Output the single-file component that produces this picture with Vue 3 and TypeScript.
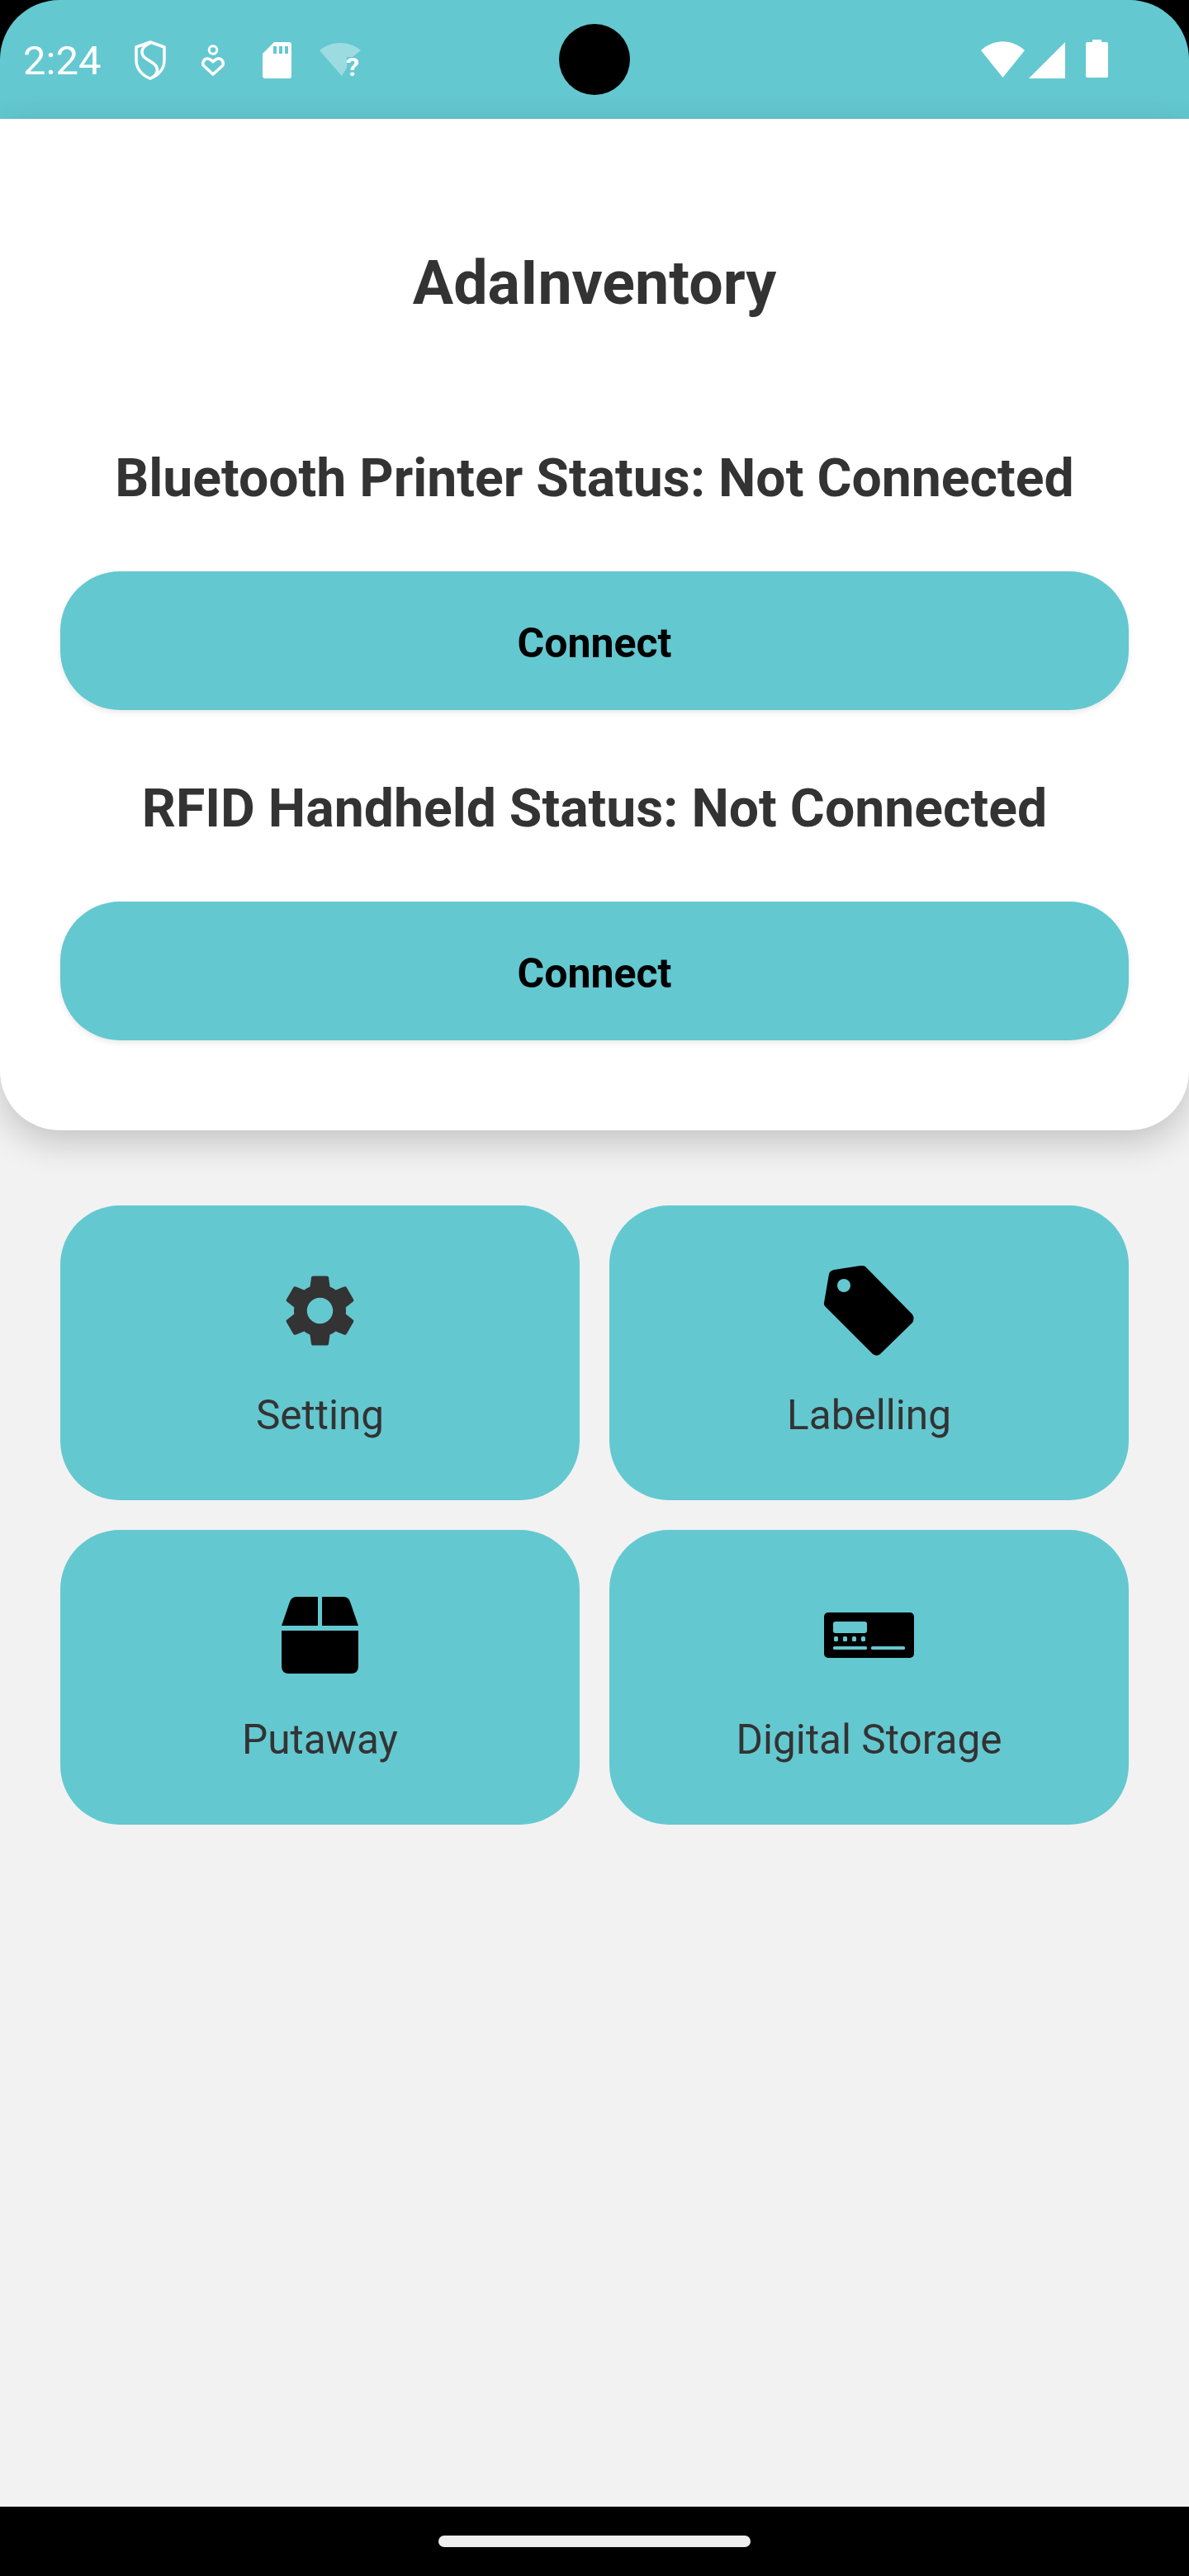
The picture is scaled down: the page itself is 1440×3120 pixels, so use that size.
<script setup lang="ts">
type TileIcon = 'gear' | 'tag' | 'box' | 'card'
interface Tile { label: string; icon: TileIcon }
interface Device { status: string }

const devices: Device[] = [
  { status: 'Bluetooth Printer Status: Not Connected' },
  { status: 'RFID Handheld Status: Not Connected' },
]
const tiles: Tile[] = [
  { label: 'Setting', icon: 'gear' },
  { label: 'Labelling', icon: 'tag' },
  { label: 'Putaway', icon: 'box' },
  { label: 'Digital Storage', icon: 'card' },
]
</script>

<template>
  <div class="phone">
    <header class="status">
      <span class="time">2:24</span>
      <svg class="si shield" viewBox="0 0 40 48">
        <path d="M20 2 L37 8 V24 C37 35 29 43 20 46 C11 43 3 35 3 24 V8 Z" fill="none" stroke="#fff" stroke-width="3.5" stroke-linejoin="round"/>
        <path d="M20 3 C12 6 8 12 11 18 C14 24 26 26 28 33 C30 39 25 44 20 46" fill="none" stroke="#fff" stroke-width="3.5"/>
      </svg>
      <svg class="si person" viewBox="0 0 28 38">
        <circle cx="14" cy="6.500" r="4.800" fill="none" stroke="#fff" stroke-width="3"/>
        <path d="M14 36 L2.500 25.500 C0.500 22.500 3 17 7 17 C10 17 12 18.500 14 21 C16 18.500 18 17 21 17 C25 17 27.500 22.500 25.500 25.500 Z" fill="none" stroke="#fff" stroke-width="3.500" stroke-linejoin="round"/>
      </svg>
      <svg class="si sd" viewBox="0 0 35 44">
        <path d="M14 0 H32 Q35 0 35 3 V41 Q35 44 32 44 H3 Q0 44 0 41 V14 Z M13 5 V14 H17 V5 Z M20 5 V14 H24 V5 Z M27 5 V14 H31 V5 Z" fill="#fff" fill-rule="evenodd"/>
      </svg>
      <svg class="si wifiq" viewBox="0 0 50 40">
        <path d="M0 9 C14 -3 36 -3 50 9 L40 17 H33 V30 L27 40 Z" fill="#fff" opacity=".36"/>
        <text x="32" y="40" class="q">?</text>
      </svg>
      <span class="spacer"></span>
      <svg class="si wifi" viewBox="0 0 53 44">
        <path d="M0 11 C16 -3.500 37 -3.500 53 11 L26.500 44 Z" fill="#fff"/>
      </svg>
      <svg class="si signal" viewBox="0 0 44 44">
        <path d="M44 0 V44 H0 Z" fill="#fff"/>
      </svg>
      <svg class="si battery" viewBox="0 0 27 46">
        <path d="M8 0 H19 V3 H25 Q27 3 27 5 V44 Q27 46 25 46 H2 Q0 46 0 44 V5 Q0 3 2 3 H8 Z" fill="#fff"/>
      </svg>
      <span class="camera"></span>
    </header>

    <main class="screen">
      <section class="card">
        <h1 class="title">AdaInventory</h1>
        <div v-for="d in devices" :key="d.status" class="device">
          <h2 class="heading">{{ d.status }}</h2>
          <button class="connect" type="button">Connect</button>
        </div>
      </section>

      <section class="grid">
        <div v-for="t in tiles" :key="t.label" class="tile">
          <div class="icon-slot">
            <svg v-if="t.icon === 'gear'" class="ic gear" viewBox="0 0 24 24">
              <path fill="#333" d="M19.14 12.94c.04-.3.06-.61.06-.94 0-.32-.02-.64-.07-.94l2.03-1.58c.18-.14.23-.41.12-.61l-1.92-3.32c-.12-.22-.37-.29-.59-.22l-2.39.96c-.5-.38-1.03-.7-1.62-.94l-.36-2.54c-.04-.24-.24-.41-.48-.41h-3.84c-.24 0-.43.17-.47.41l-.36 2.54c-.59.24-1.13.57-1.62.94l-2.39-.96c-.22-.08-.47 0-.59.22L2.74 8.87c-.12.21-.08.47.12.61l2.03 1.58c-.05.3-.09.63-.09.94s.02.64.07.94l-2.03 1.58c-.18.14-.23.41-.12.61l1.92 3.32c.12.22.37.29.59.22l2.39-.96c.5.38 1.03.7 1.62.94l.36 2.54c.05.24.24.41.48.41h3.84c.24 0 .44-.17.47-.41l.36-2.54c.59-.24 1.13-.56 1.62-.94l2.39.96c.22.08.47 0 .59-.22l1.92-3.32c.12-.22.07-.47-.12-.61l-2.01-1.58zM12 15.6c-1.98 0-3.6-1.62-3.6-3.6s1.62-3.6 3.6-3.6 3.6 1.62 3.6 3.6-1.62 3.6-3.6 3.6z"/>
            </svg>
            <svg v-else-if="t.icon === 'tag'" class="ic tag" viewBox="0 0 109 109">
              <path fill="#000" fill-rule="evenodd" d="M1 49 Q-0.500 47 0 45 L6 10 Q7 6 12 5 L44 0 Q48 -0.500 50 1 L107 59 Q110 64 107 69 L68 107 Q64 110.500 59 107 Z M24 16 A8 8 0 1 0 24 32 A8 8 0 1 0 24 16 Z"/>
            </svg>
            <svg v-else-if="t.icon === 'box'" class="ic box" viewBox="0 0 93 93">
              <path fill="#000" d="M44 0 V35 H0 L10 6 Q12 0 18 0 Z M49 0 H75 Q81 0 83 6 L93 35 H49 Z M0 41 H93 V84 Q93 93 84 93 H9 Q0 93 0 84 Z"/>
            </svg>
            <svg v-else class="ic idcard" viewBox="0 0 109 55">
              <rect width="109" height="55" rx="5" fill="#000"/>
              <g fill="#64c8d0">
                <rect x="11" y="11" width="41" height="14" rx="3"/>
                <rect x="12" y="29" width="5" height="6" rx="1.500"/>
                <rect x="23" y="29" width="5" height="6" rx="1.500"/>
                <rect x="34" y="29" width="5" height="6" rx="1.500"/>
                <rect x="45" y="29" width="5" height="6" rx="1.500"/>
                <rect x="11" y="41" width="41" height="4" rx="1.500"/>
                <rect x="57" y="41" width="41" height="4" rx="1.500"/>
              </g>
            </svg>
          </div>
          <span class="label">{{ t.label }}</span>
        </div>
      </section>
    </main>

    <footer class="nav"><span class="pill"></span></footer>
  </div>
</template>

<style>
html, body { margin: 0; background: #000; }
</style>

<style scoped>
.phone {
  width: 1440px;
  height: 3120px;
  display: flex;
  flex-direction: column;
  background: #000;
  font-family: Roboto, "Liberation Sans", sans-serif;
  overflow: hidden;
}
.status {
  position: relative;
  flex: 0 0 144px;
  display: flex;
  align-items: flex-start;
  background: #64c8d0;
  border-radius: 72px 72px 0 0;
  color: #fff;
}
.time { font-size: 49px; line-height: 56px; margin: 46px 0 0 28px; width: 134px; }
.si { display: block; flex: none; }
.shield { width: 40px; height: 48px; margin: 49px 0 0 0; }
.person { width: 28px; height: 38px; margin: 54px 0 0 42px; }
.sd { width: 35px; height: 44px; margin: 51px 0 0 46px; }
.wifiq { width: 50px; height: 40px; margin: 52px 0 0 34px; overflow: visible; }
.q { font-size: 32px; font-weight: 700; fill: #fff; font-family: Roboto, sans-serif; }
.spacer { flex: 1; }
.wifi { width: 53px; height: 44px; margin: 50px 0 0 0; }
.signal { width: 44px; height: 44px; margin: 51px 0 0 5px; }
.battery { width: 27px; height: 46px; margin: 48px 98px 0 25px; }
.camera {
  position: absolute;
  left: 677px;
  top: 29px;
  width: 86px;
  height: 86px;
  border-radius: 50%;
  background: #000;
}
.screen {
  flex: 1;
  display: flex;
  flex-direction: column;
  background: #f2f2f2;
}
.card {
  position: relative;
  height: 1225px;
  box-sizing: border-box;
  padding: 0 73px;
  background: #fff;
  border-radius: 0 0 72px 72px;
  box-shadow: 0 14px 44px rgba(0, 0, 0, 0.2);
  text-align: center;
}
.title {
  margin: 0 0 73px;
  padding-top: 155px;
  font-size: 73.500px;
  line-height: 88px;
  font-weight: 700;
  color: #333;
}
.device { display: flex; flex-direction: column; }
.heading {
  box-sizing: border-box;
  margin: 0;
  height: 232px;
  padding-top: 6px;
  display: flex;
  align-items: center;
  justify-content: center;
  font-size: 64.300px;
  font-weight: 700;
  color: #333;
}
.connect {
  height: 168px;
  border: 0;
  padding: 5px 0 0;
  border-radius: 72px;
  background: #64c8d0;
  box-shadow: 0 3px 7px rgba(0, 0, 0, 0.09);
  font-family: inherit;
  font-size: 50px;
  font-weight: 700;
  color: #000;
}
.grid {
  display: grid;
  grid-template-columns: 629px 629px;
  grid-auto-rows: 357px;
  gap: 36px;
  padding: 91px 73px 0;
}
.tile {
  display: flex;
  flex-direction: column;
  align-items: center;
  background: #64c8d0;
  border-radius: 72px;
}
.icon-slot {
  height: 254px;
  flex: none;
  display: flex;
  align-items: center;
  justify-content: center;
}
.ic { display: block; }
.gear { width: 105px; height: 105px; }
.tag { width: 109px; height: 109px; overflow: visible; }
.box { width: 93px; height: 93px; }
.idcard { width: 109px; height: 55px; }
.label {
  font-size: 49.500px;
  line-height: 56px;
  color: #333;
  margin-top: -28px;
}
.nav {
  flex: 0 0 84px;
  display: flex;
  align-items: center;
  justify-content: center;
  background: #000;
}
.pill {
  width: 378px;
  height: 14px;
  border-radius: 7px;
  background: #eee;
}
</style>
